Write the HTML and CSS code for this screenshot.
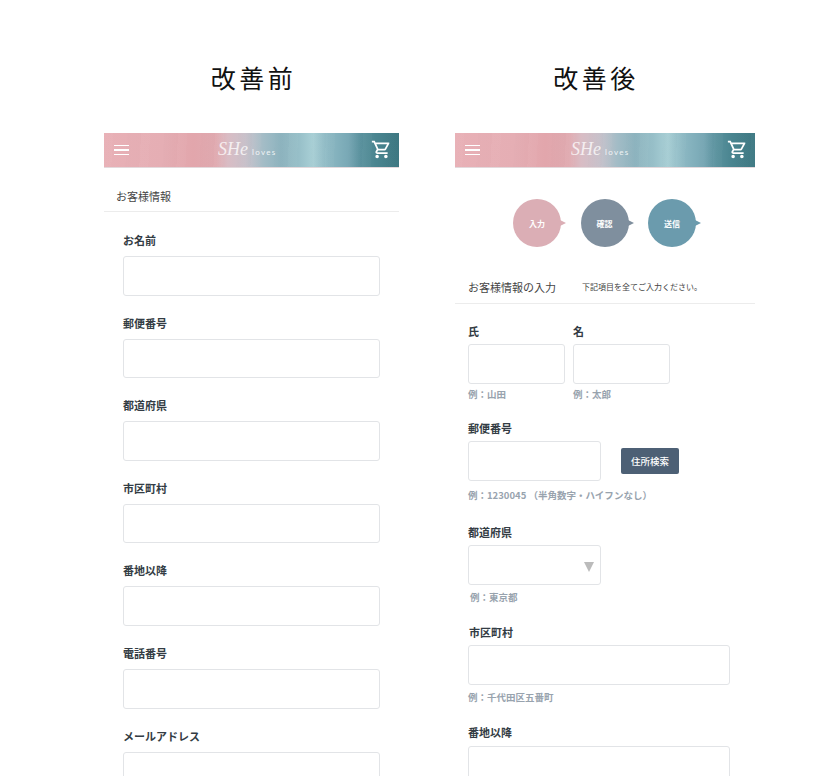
FILE: index.html
```html
<!DOCTYPE html>
<html lang="ja">
<head>
  <meta charset="UTF-8">
  <meta name="viewport" content="width=device-width, initial-scale=1.0">
  <title>改善前 改善後</title>
  <link rel="stylesheet" href="styles.css">
</head>
<body>
  <div class="compare">

    <!-- 改善前 -->
    <section class="col col-before">
      <h1 class="col-title">改善前</h1>
      <header class="banner">
        <span class="menu-icon"><i></i><i></i><i></i></span>
        <span class="logo"><span class="logo-mark">SHe</span><span class="logo-sub">loves</span></span>
        <svg class="cart-icon" viewBox="0 0 24 24"><path d="M15.55 13c.75 0 1.41-.41 1.75-1.03l3.58-6.49A.996.996 0 0 0 20.01 4H5.21l-.94-2H1v2h2l3.6 7.59-1.35 2.44C4.52 15.37 5.48 17 7 17h12v-2H7l1.1-2h7.45zM6.16 6h12.15l-2.76 5H8.53L6.16 6zM7 18c-1.1 0-1.99.9-1.99 2S5.9 22 7 22s2-.9 2-2-.9-2-2-2zm10 0c-1.1 0-1.99.9-1.99 2s.89 2 1.99 2 2-.9 2-2-.9-2-2-2z"/></svg>
      </header>
      <div class="section-head section-head-before"><h2>お客様情報</h2></div>
      <form class="form-before">
        <div class="plain-field"><label>お名前</label><input type="text"></div>
        <div class="plain-field"><label>郵便番号</label><input type="text"></div>
        <div class="plain-field"><label>都道府県</label><input type="text"></div>
        <div class="plain-field"><label>市区町村</label><input type="text"></div>
        <div class="plain-field"><label>番地以降</label><input type="text"></div>
        <div class="plain-field"><label>電話番号</label><input type="text"></div>
        <div class="plain-field"><label>メールアドレス</label><input type="text"></div>
      </form>
    </section>

    <!-- 改善後 -->
    <section class="col col-after">
      <h1 class="col-title col-title-after">改善後</h1>
      <header class="banner">
        <span class="menu-icon"><i></i><i></i><i></i></span>
        <span class="logo"><span class="logo-mark">SHe</span><span class="logo-sub">loves</span></span>
        <svg class="cart-icon" viewBox="0 0 24 24"><path d="M15.55 13c.75 0 1.41-.41 1.75-1.03l3.58-6.49A.996.996 0 0 0 20.01 4H5.21l-.94-2H1v2h2l3.6 7.59-1.35 2.44C4.52 15.37 5.48 17 7 17h12v-2H7l1.1-2h7.45zM6.16 6h12.15l-2.76 5H8.53L6.16 6zM7 18c-1.1 0-1.99.9-1.99 2S5.9 22 7 22s2-.9 2-2-.9-2-2-2zm10 0c-1.1 0-1.99.9-1.99 2s.89 2 1.99 2 2-.9 2-2-.9-2-2-2z"/></svg>
      </header>

      <div class="steps">
        <div class="step step-input">入力</div>
        <div class="step step-confirm">確認</div>
        <div class="step step-send">送信</div>
      </div>

      <div class="section-head section-head-after">
        <h2>お客様情報の入力</h2>
        <p>下記項目を全てご入力ください。</p>
      </div>

      <form class="form-after">
        <div class="field field-names">
          <div class="name-part">
            <label>氏</label>
            <input type="text">
            <p class="note">例：山田</p>
          </div>
          <div class="name-part">
            <label>名</label>
            <input type="text">
            <p class="note">例：太郎</p>
          </div>
        </div>

        <div class="field field-postal">
          <label>郵便番号</label>
          <div class="postal-row">
            <input class="input-mid" type="text">
            <button type="button" class="search-btn">住所検索</button>
          </div>
          <p class="note">例：1230045 （半角数字・ハイフンなし）</p>
        </div>

        <div class="field">
          <label>都道府県</label>
          <div class="select-wrap"><select class="input-mid"></select></div>
          <p class="note note-shift">例：東京都</p>
        </div>

        <div class="field">
          <label class="label-shift">市区町村</label>
          <input class="input-wide" type="text">
          <p class="note">例：千代田区五番町</p>
        </div>

        <div class="field">
          <label class="label-last">番地以降</label>
          <input class="input-wide" type="text">
        </div>
      </form>
    </section>

  </div>
</body>
</html>
```

FILE: styles.css
```css
html, body {
  margin: 0;
  height: 776px;
  overflow: hidden;
  background: #fff;
}

body {
  font-family: "Noto Sans CJK JP", "Noto Sans", sans-serif;
  color: #333c44;
}

.compare {
  display: flex;
  gap: 56px;
  padding-left: 104px;
}

.col-before {
  width: 295px;
}

.col-after {
  width: 300px;
}

.col-title {
  margin: 0;
  height: 133px;
  padding: 59px 0 0 4px;
  box-sizing: border-box;
  font-size: 25px;
  line-height: 36px;
  font-weight: 400;
  letter-spacing: 3.5px;
  text-align: center;
  color: #111;
}

.col-title-after {
  padding: 59px 18px 0 0;
}

/* ヘッダー */
.banner {
  position: relative;
  height: 34.5px;
  display: flex;
  align-items: center;
  justify-content: space-between;
  padding: 0 7px 0 10px;
  box-sizing: border-box;
  border-bottom: 1px solid #e3d9dc;
  background:
    repeating-linear-gradient(93deg, rgba(255,255,255,.025) 0 9px, rgba(255,255,255,0) 9px 23px, rgba(120,90,100,.012) 23px 37px),
    linear-gradient(90deg, #e8b0b6 0%, #e5aeb4 20%, #e2a6ac 30%, #e0aab0 38%, #d9bcc4 42%, #c9c2cb 48%, #a3bcc6 54%, #8db4bf 60%, #97bfc8 66%, #a9d0d6 71%, #8cb8c3 76%, #78a8b5 83%, #5a929e 87%, #4a8590 92%, #3d7882 100%);
}

.menu-icon {
  display: flex;
  flex-direction: column;
  gap: 3px;
  width: 14.5px;
}

.menu-icon i {
  display: block;
  height: 1.5px;
  background: #fff;
}

.logo {
  position: absolute;
  left: 114px;
  top: 1px;
  display: flex;
  align-items: baseline;
  color: #fff;
}

.col-after .logo {
  left: 116px;
}

.logo-mark {
  font-family: "Liberation Serif", serif;
  font-style: italic;
  font-size: 18px;
  line-height: 30px;
  opacity: .75;
}

.logo-sub {
  margin-left: 4px;
  font-family: Lato, sans-serif;
  font-size: 8px;
  letter-spacing: 1.3px;
  opacity: .85;
}

.cart-icon {
  width: 21px;
  height: 21px;
  fill: #fff;
}

/* 見出し */
.section-head {
  display: flex;
  align-items: center;
  height: 16px;
  box-sizing: content-box;
  border-bottom: 1px solid #ececec;
}

.section-head h2 {
  margin: 0;
  font-size: 11px;
  line-height: 16px;
  font-weight: 400;
  color: #444;
}

.section-head p {
  margin: 0 0 0 26px;
  font-size: 8px;
  line-height: 16px;
  color: #444;
}

.section-head-before {
  padding: 20.5px 0 7px 12px;
}

.section-head-after {
  padding: 32px 0 8px 13px;
}

/* 改善前フォーム */
.form-before {
  padding: 21px 19px 0;
}

.plain-field {
  margin-bottom: 20px;
}

label {
  display: block;
  font-size: 11px;
  line-height: 15px;
  font-weight: 700;
  color: #333c44;
}

input, select {
  display: block;
  box-sizing: border-box;
  margin: 0;
  padding: 0;
  background: #fff;
  border: 1px solid #e2e4e7;
  border-radius: 3px;
  appearance: none;
}

.plain-field label {
  margin-bottom: 8px;
}

.plain-field input {
  width: 257px;
  height: 39.6px;
}

/* ステップ */
.steps {
  display: flex;
  gap: 19.5px;
  padding: 31.5px 0 0 58px;
}

.step {
  position: relative;
  width: 48px;
  height: 48px;
  border-radius: 50%;
  display: flex;
  align-items: center;
  justify-content: center;
  font-size: 8px;
  font-weight: 700;
  color: #fff;
}

.step::after {
  content: "";
  position: absolute;
  left: 47px;
  top: 21px;
  border-left: 6px solid currentColor;
  border-top: 3.5px solid transparent;
  border-bottom: 3.5px solid transparent;
}

.step-input {
  background: #dbaeb5;
}

.step-input::after {
  border-left-color: #dbaeb5;
}

.step-confirm {
  background: #7f8f9e;
}

.step-confirm::after {
  border-left-color: #7f8f9e;
}

.step-send {
  background: #6b9bad;
}

.step-send::after {
  border-left-color: #6b9bad;
}

/* 改善後フォーム */
.form-after {
  padding: 20px 0 0 13px;
}

.form-after label {
  margin-bottom: 5px;
}

.form-after input, .form-after select {
  height: 40px;
}

.field {
  margin-bottom: 21px;
}

.field-names {
  display: flex;
  gap: 8.5px;
  margin-bottom: 20px;
}

.name-part input {
  width: 96.5px;
}

.field-names .note {
  margin-top: 3px;
}

.field-postal {
  margin-bottom: 23px;
}

.field-postal .note {
  margin-top: 7px;
}

.postal-row {
  display: flex;
  align-items: center;
  gap: 20px;
}

.input-mid {
  width: 133px;
}

.input-wide {
  width: 262px;
}

.search-btn {
  width: 58px;
  height: 26px;
  padding: 0;
  border: none;
  border-radius: 2px;
  background: #4d6075;
  font-family: inherit;
  font-size: 9.5px;
  font-weight: 500;
  color: #fff;
}

.select-wrap {
  position: relative;
  width: 133px;
}

.select-wrap::after {
  content: "";
  position: absolute;
  right: 7px;
  top: 17px;
  border-top: 10px solid #bbb;
  border-left: 5.5px solid transparent;
  border-right: 5.5px solid transparent;
}

.note {
  margin: 5px 0 0;
  font-size: 9.5px;
  line-height: 14px;
  font-weight: 700;
  color: #98a3ae;
}

.note-shift {
  margin-left: 2px;
}

.label-shift {
  margin-left: 1px;
}

.form-after .label-last {
  margin-bottom: 6px;
}
```
